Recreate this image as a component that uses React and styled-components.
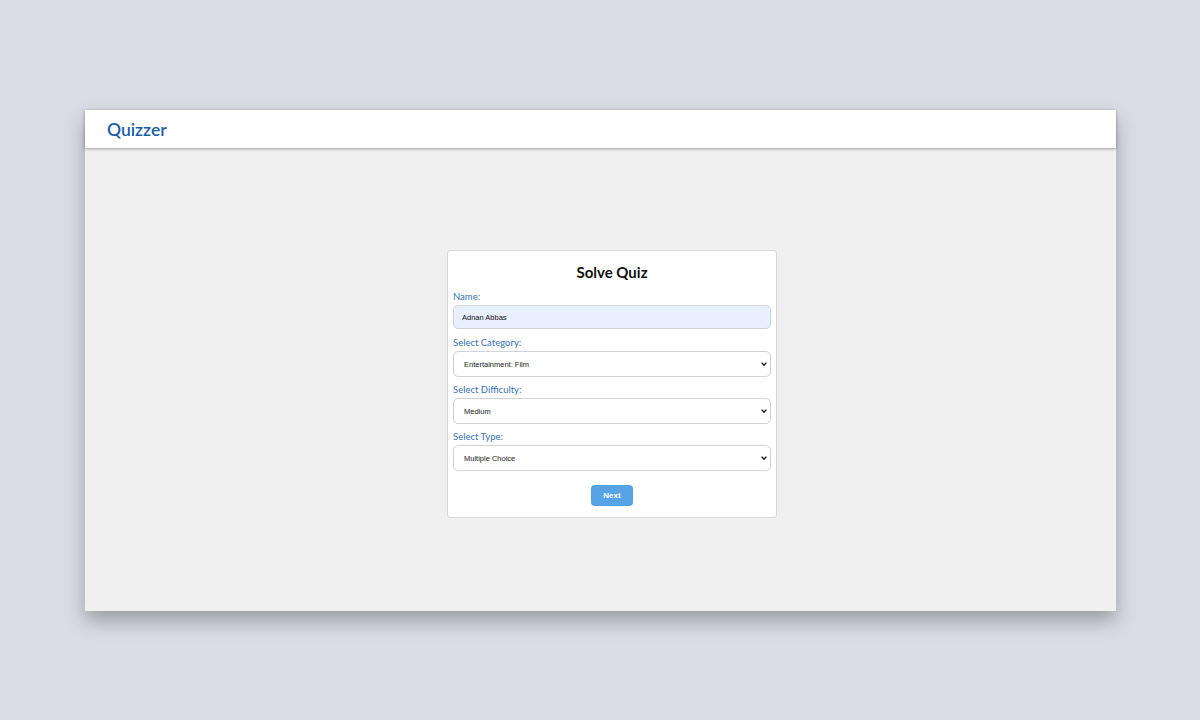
import React, { useState } from 'react';
import styled, { createGlobalStyle } from 'styled-components';

const GlobalStyle = createGlobalStyle`
  html, body {
    margin: 0;
    padding: 0;
    background: #d9dce3;
    font-family: Lato, "Noto Sans", sans-serif;
  }
`

const Page = styled.div`
  width: 1200px;
  height: 720px;
  padding: 110px 84px 0 85px;
  box-sizing: border-box;
`

const Window = styled.div`
  width: 1031px;
  height: 501px;
  background: #f0f0f0;
  display: flex;
  flex-direction: column;
  box-shadow: 0 10px 18px rgba(0, 0, 0, 0.28);
`

const Header = styled.header`
  height: 38px;
  flex-shrink: 0;
  background: #ffffff;
  display: flex;
  align-items: center;
  padding-left: 22px;
  box-shadow: 0 1px 3px rgba(0, 0, 0, 0.35);
  position: relative;
  z-index: 1;
`

const Logo = styled.h1`
  margin: 0;
  font-family: Lato, sans-serif;
  font-size: 17.5px;
  font-weight: 600;
  color: #1a5ca8;
`

const Main = styled.main`
  flex: 1;
  display: flex;
  align-items: center;
  justify-content: center;
  padding: 9px 0 0 23px;
`

const Card = styled.form`
  width: 330px;
  box-sizing: border-box;
  background: #ffffff;
  border: 1px solid #d6d6d6;
  border-radius: 3px;
  padding: 5px;
  display: flex;
  flex-direction: column;
`

const Title = styled.h2`
  margin: 7px 0 10px;
  font-family: Lato, sans-serif;
  font-size: 15px;
  line-height: 18px;
  font-weight: 700;
  color: #111;
  text-align: center;
`

const Label = styled.label`
  display: block;
  font-family: Lato, sans-serif;
  font-size: 9.5px;
  line-height: 12px;
  color: #3572b6;
  margin-bottom: 2px;
`

const Field = styled.div`
  margin-bottom: ${p => p.$mb || 7}px;
`

const TextInput = styled.input`
  display: block;
  width: 100%;
  height: 24px;
  box-sizing: border-box;
  border: 1px solid #cfd4db;
  border-radius: 5px;
  background: #e8f0fe;
  padding: 0 8px;
  font-family: "Liberation Sans", Arial, sans-serif;
  font-size: 7.5px;
  color: #111;
  outline: none;
`

const SelectWrap = styled.div`
  position: relative;
`

const Select = styled.select`
  display: block;
  width: 100%;
  height: 26px;
  box-sizing: border-box;
  appearance: none;
  border: 1px solid #cfd4db;
  border-radius: 5px;
  background: #ffffff;
  padding: 0 10px;
  font-family: "Liberation Sans", Arial, sans-serif;
  font-size: 7.5px;
  color: #222;
  outline: none;
`

const Chevron = styled.svg`
  position: absolute;
  right: 4px;
  top: 50%;
  margin-top: -2px;
  width: 6px;
  height: 4px;
  pointer-events: none;
`

const Button = styled.button`
  align-self: center;
  margin: 7px 0 6px;
  width: 42px;
  height: 21px;
  border: none;
  border-radius: 4px;
  background: #56a3e6;
  color: #ffffff;
  font-family: "Liberation Sans", Arial, sans-serif;
  font-size: 8px;
  font-weight: 700;
  cursor: pointer;
`

const Dropdown = ({ value, options }) => (
  <SelectWrap>
    <Select defaultValue={value}>
      {options.map(o => <option key={o.value} value={o.value}>{o.label}</option>)}
    </Select>
    <Chevron viewBox="0 0 6 4">
      <path d="M0.6 0.6 L3 3.2 L5.4 0.6" fill="none" stroke="#111" strokeWidth="1.4" />
    </Chevron>
  </SelectWrap>
)

const App = () => {
  const [name, setName] = useState('Adnan Abbas');
  return (
    <>
      <GlobalStyle />
      <Page>
        <Window>
          <Header>
            <Logo>Quizzer</Logo>
          </Header>
          <Main>
            <Card onSubmit={e => e.preventDefault()}>
              <Title>Solve Quiz</Title>
              <Field $mb={8}>
                <Label>Name:</Label>
                <TextInput value={name} onChange={e => setName(e.target.value)} />
              </Field>
              <Field>
                <Label>Select Category:</Label>
                <Dropdown value="film" options={[
                  { value: 'film', label: 'Entertainment: Film' },
                  { value: 'books', label: 'Entertainment: Books' },
                ]} />
              </Field>
              <Field>
                <Label>Select Difficulty:</Label>
                <Dropdown value="medium" options={[
                  { value: 'easy', label: 'Easy' },
                  { value: 'medium', label: 'Medium' },
                  { value: 'hard', label: 'Hard' },
                ]} />
              </Field>
              <Field>
                <Label>Select Type:</Label>
                <Dropdown value="multiple" options={[
                  { value: 'multiple', label: 'Multiple Choice' },
                  { value: 'boolean', label: 'True / False' },
                ]} />
              </Field>
              <Button type="submit">Next</Button>
            </Card>
          </Main>
        </Window>
      </Page>
    </>
  );
}

export default App;
